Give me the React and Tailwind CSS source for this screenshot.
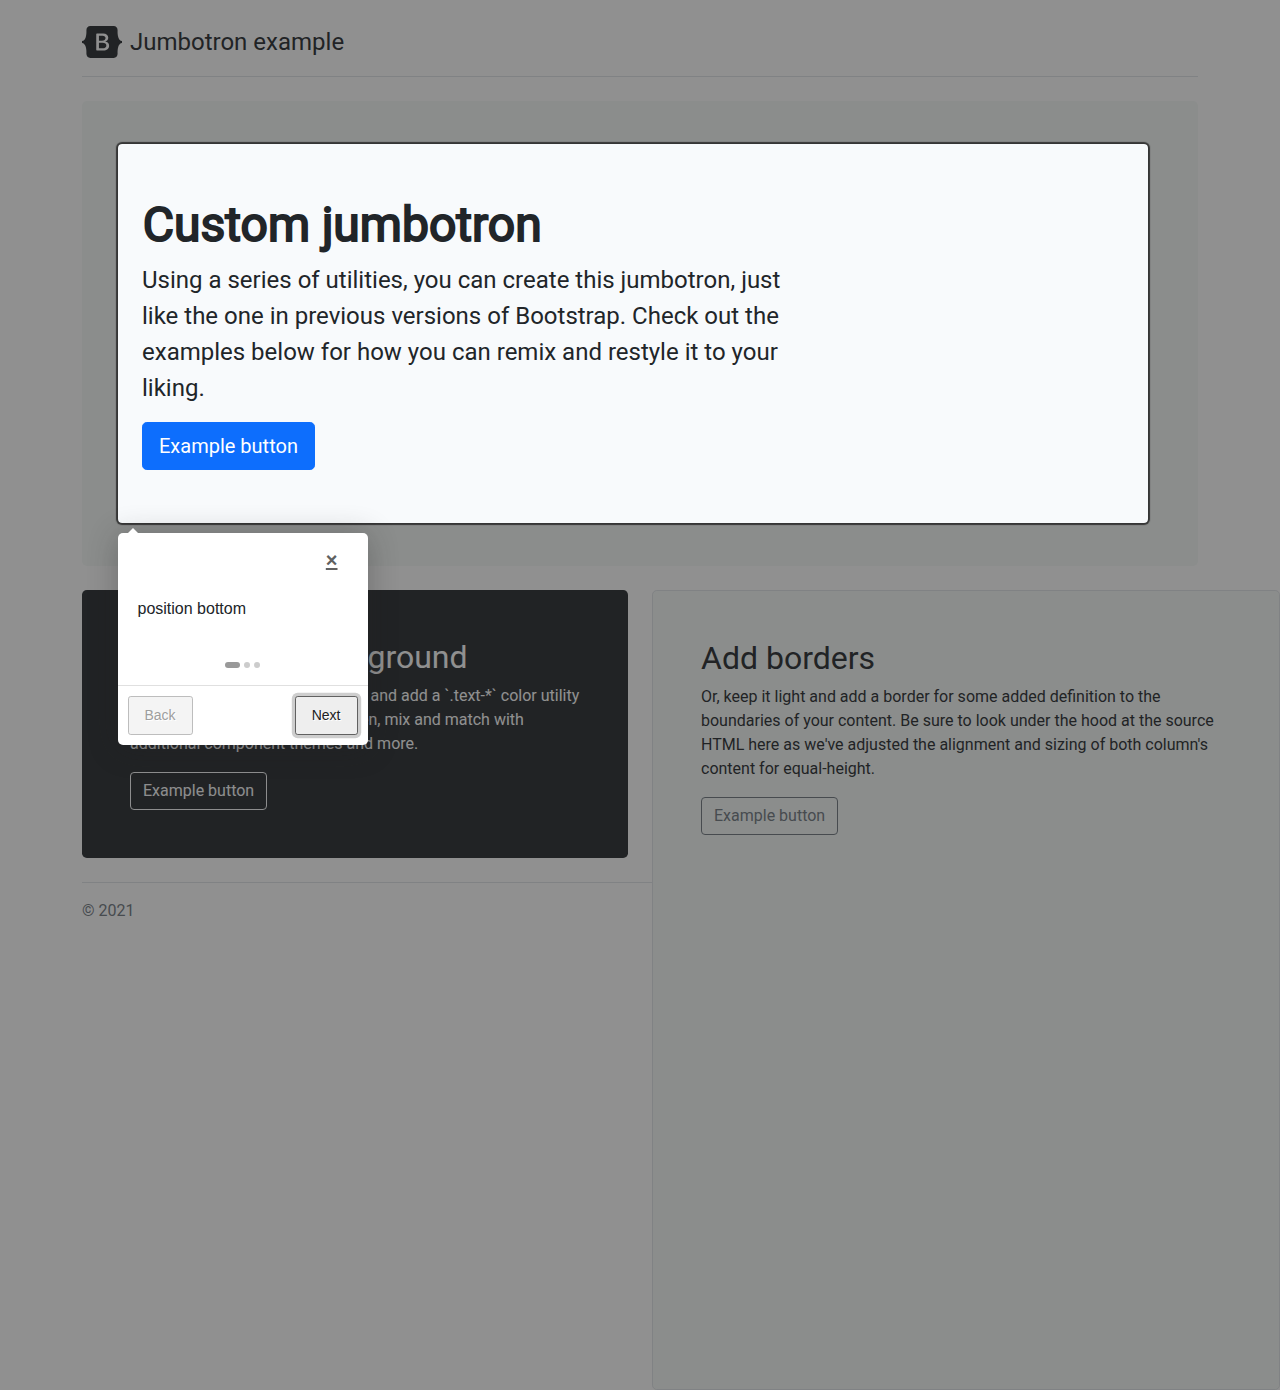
function Logo() {
  return (
    <svg width="40" height="32" viewBox="0 0 118 94" className="mr-2" role="img" aria-label="Bootstrap">
      <path
        fillRule="evenodd"
        clipRule="evenodd"
        fill="currentColor"
        d="M24.509 0c-6.733 0-11.715 5.893-11.492 12.284.214 6.14-.064 14.092-2.066 20.577C8.943 39.365 5.547 43.485 0 44.014v5.972c5.547.529 8.943 4.649 10.951 11.153 2.002 6.485 2.28 14.437 2.066 20.577C12.794 88.106 17.776 94 24.51 94H93.5c6.733 0 11.714-5.893 11.491-12.284-.214-6.14.064-14.092 2.066-20.577 2.009-6.504 5.396-10.624 10.943-11.153v-5.972c-5.547-.529-8.934-4.649-10.943-11.153-2.002-6.484-2.28-14.437-2.066-20.577C105.214 5.894 100.233 0 93.5 0H24.508zM80 57.863C80 66.663 73.436 72 62.543 72H44a2 2 0 01-2-2V24a2 2 0 012-2h18.437c9.083 0 15.044 4.92 15.044 12.474 0 5.302-4.01 10.049-9.119 10.88v.277C75.317 46.394 80 51.21 80 57.863zM60.521 28.34H49.948v14.934h8.905c6.884 0 10.68-2.772 10.68-7.727 0-4.643-3.264-7.207-9.012-7.207zM49.948 49.2v16.458H60.91c7.167 0 10.964-2.876 10.964-8.281 0-5.406-3.903-8.178-11.425-8.178H49.948z"
      />
    </svg>
  );
}

function TourStep() {
  return (
    <div className="absolute left-[117.5px] top-[533px] flex h-[212px] w-[250px] flex-col rounded-[5px] bg-white font-['Liberation_Sans',sans-serif] shadow-[0_3px_30px_rgba(33,33,33,0.3)]">
      <div className="absolute -top-[10px] left-[10px] border-[5px] border-transparent border-b-white" />
      <div className="flex justify-end pr-5 pt-2.5">
        <a className="px-2.5 py-[7px] text-[20px] font-bold leading-[20px] text-[#616161] underline" role="button">×</a>
      </div>
      <div className="px-5 pt-5 text-[16px] leading-6 text-[#212529]">position bottom</div>
      <div className="mt-auto flex justify-center gap-1 pb-[17px] pr-px">
        <span className="h-1.5 w-[15px] rounded-[10px] bg-[#999]" />
        <span className="size-1.5 rounded-[10px] bg-[#ccc]" />
        <span className="size-1.5 rounded-[10px] bg-[#ccc]" />
      </div>
      <div className="flex h-[60px] justify-between border-t border-[#e0e0e0] p-2.5 text-[14px] leading-[21px]">
        <button className="h-[39px] rounded-[2.8px] border border-[#bdbdbd] bg-[#f4f4f4] px-4 text-[#9e9e9e] [text-shadow:1px_1px_0_#fff]">Back</button>
        <button className="h-[39px] rounded-[2.8px] border border-[#616161] bg-[#eee] px-4 text-[#212121] shadow-[0_0_0_3.2px_rgba(158,158,158,0.5)] [text-shadow:1px_1px_0_#fff]">Next</button>
      </div>
    </div>
  );
}

export default function App() {
  return (
    <div className="relative h-[1390px] w-[1280px] overflow-hidden bg-white font-['Roboto',sans-serif] text-[16px] leading-6 text-[#212529]">
      <main className="mx-auto w-[1140px] px-3 py-6">
        <header className="mb-6 border-b border-[#dee2e6] pb-4">
          <a className="flex items-center text-[24px] leading-9">
            <Logo />
            <span>Jumbotron example</span>
          </a>
        </header>

        <section className="mb-6 rounded-[4.8px] bg-[#f5f9f7] py-[43px] pl-9 pr-[50px]">
          <div className="h-[379px] bg-[#f8fafc] px-6 pt-[52px]">
            <h1 className="mb-[9px] pl-[0.8px] text-[48px] font-normal leading-[57px] [-webkit-text-stroke:2px_#212529]">Custom jumbotron</h1>
            <p className="mb-4 w-[664px] text-[24px] leading-9">
              Using a series of utilities, you can create this jumbotron, just like the one in previous versions of
              Bootstrap. Check out the examples below for how you can remix and restyle it to your liking.
            </p>
            <button className="block h-12 rounded-[4.8px] border border-[#0d6efd] bg-[#0d6efd] px-4 text-[20px] leading-[30px] text-white">
              Example button
            </button>
          </div>
        </section>

        <div className="flex h-[268px] gap-6">
          <section className="w-[546px] shrink-0 rounded-[4.8px] bg-[#212529] p-12 text-white">
            <h2 className="mb-2 text-[32px] leading-[38px]">Change the background</h2>
            <p className="mb-4">
              Swap the background-color utility and add a `.text-*` color utility to mix up the jumbotron look. Then,
              mix and match with additional component themes and more.
            </p>
            <button className="block h-[38px] rounded border border-[#f8f9fa] px-3 text-[#f8f9fa]">Example button</button>
          </section>
          <section className="relative h-[800px] w-[628px] shrink-0 rounded-[4.8px] border border-[#dee2e6] bg-[#f5f9f7] p-12">
            <h2 className="mb-2 text-[32px] leading-[38px]">Add borders</h2>
            <p className="mb-4">
              Or, keep it light and add a border for some added definition to the boundaries of your content. Be sure to
              look under the hood at the source HTML here as we've adjusted the alignment and sizing of both column's
              content for equal-height.
            </p>
            <button className="block h-[38px] rounded border border-[#6c757d] px-3 text-[#6c757d]">Example button</button>
          </section>
        </div>

        <footer className="mt-6 border-t border-[#dee2e6] pt-4 text-[#6c757d]">© 2021</footer>
      </main>

      {/* Spotlight around the highlighted step */}
      <div className="absolute left-[118px] top-[144px] h-[379px] w-[1030px] rounded shadow-[0_0_1px_2px_rgba(33,33,33,0.8),0_0_0_5000px_rgba(33,33,33,0.5)]" />
      <TourStep />
    </div>
  );
}
